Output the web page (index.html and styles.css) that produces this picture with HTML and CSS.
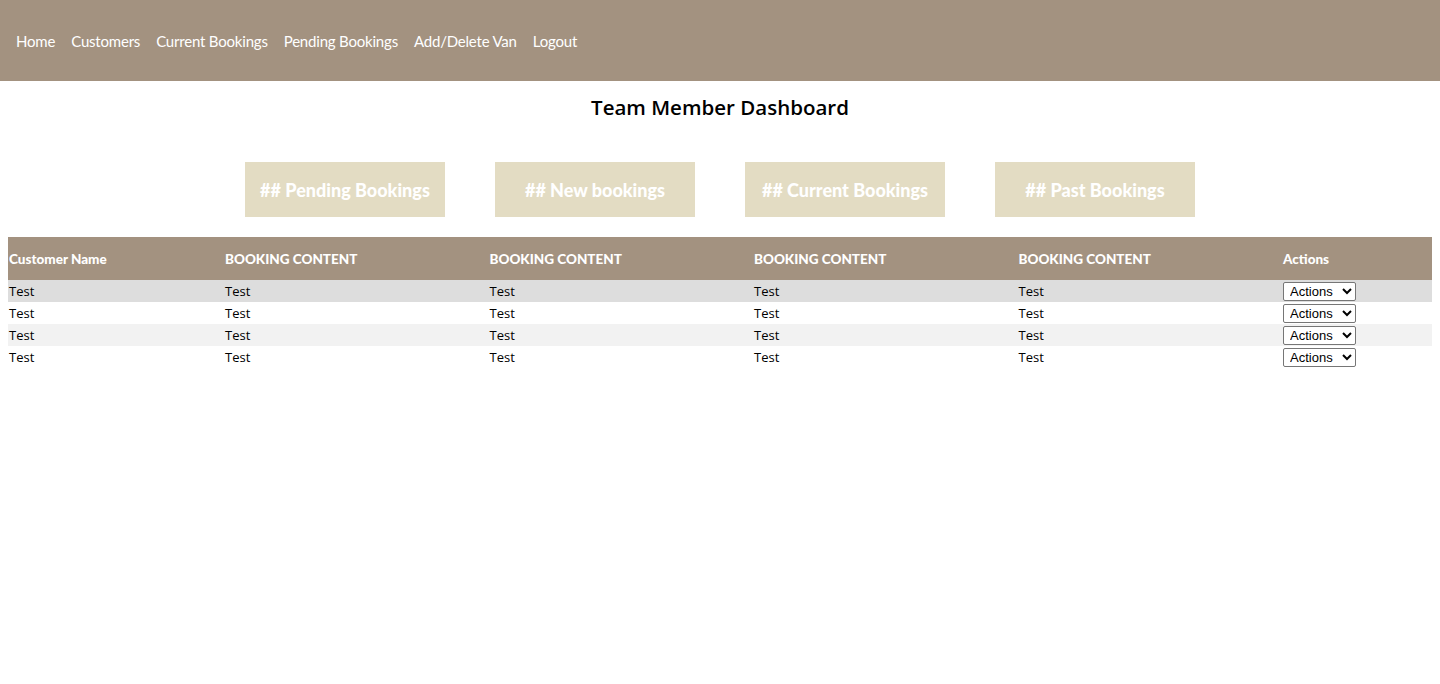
FILE: index.html
```html
<!DOCTYPE html>
<html>
<head>
<meta charset="utf-8">
<link rel="stylesheet" href="styles.css">
<title>Team Member Dashboard</title>
</head>
<body>
<nav class="topnav">
  <a href="#">Home</a>
  <a href="#">Customers</a>
  <a href="#">Current Bookings</a>
  <a href="#">Pending Bookings</a>
  <a href="#">Add/Delete Van</a>
  <a href="#">Logout</a>
</nav>
<main class="content">
  <h1 class="title">Team Member Dashboard</h1>
  <div class="cards">
    <div class="card">## Pending Bookings</div>
    <div class="card">## New bookings</div>
    <div class="card">## Current Bookings</div>
    <div class="card">## Past Bookings</div>
  </div>
  <table class="bookings">
    <colgroup>
      <col class="c1"><col class="c2"><col class="c2"><col class="c2"><col class="c2"><col class="c6">
    </colgroup>
    <thead>
      <tr><th>Customer Name</th><th>BOOKING CONTENT</th><th>BOOKING CONTENT</th><th>BOOKING CONTENT</th><th>BOOKING CONTENT</th><th>Actions</th></tr>
    </thead>
    <tbody>
      <tr class="hover"><td>Test</td><td>Test</td><td>Test</td><td>Test</td><td>Test</td><td><select class="act"><option>Actions</option></select></td></tr>
      <tr><td>Test</td><td>Test</td><td>Test</td><td>Test</td><td>Test</td><td><select class="act"><option>Actions</option></select></td></tr>
      <tr><td>Test</td><td>Test</td><td>Test</td><td>Test</td><td>Test</td><td><select class="act"><option>Actions</option></select></td></tr>
      <tr><td>Test</td><td>Test</td><td>Test</td><td>Test</td><td>Test</td><td><select class="act"><option>Actions</option></select></td></tr>
    </tbody>
  </table>
</main>
</body>
</html>
```

FILE: styles.css
```css
html, body {
  margin: 0;
  padding: 0;
  background: #fff;
}
body {
  font-family: "Lato", "Open Sans", sans-serif;
  color: #000;
}
.topnav {
  background: #a39280;
  height: 81px;
  display: flex;
  align-items: center;
  padding-left: 16px;
  gap: 16px;
  box-sizing: border-box;
}
.topnav a {
  color: #fff;
  text-decoration: none;
  font-size: 15px;
  letter-spacing: -0.2px;
}
.content {
  padding: 0 8px;
}
.title {
  margin: 13px 0 0;
  text-align: center;
  font-family: "Open Sans", sans-serif;
  font-weight: 600;
  font-size: 20.5px;
  line-height: 26px;
  height: 26px;
}
.cards {
  display: flex;
  justify-content: center;
  gap: 50px;
  margin-top: 42px;
}
.card {
  width: 200px;
  height: 55px;
  background: #e3dcc3;
  color: #fff;
  font-weight: 900;
  font-size: 18px;
  display: flex;
  align-items: center;
  justify-content: center;
}
.bookings {
  margin-top: 20px;
  width: 1424px;
  border-collapse: collapse;
  table-layout: fixed;
}
.c1 { width: 216px; }
.c2 { width: 264.5px; }
.c6 { width: 150px; }
.bookings th {
  background: #a39280;
  color: #fff;
  font-weight: 900;
  font-size: 13.5px;
  text-align: left;
  height: 43px;
  padding: 0 1px;
}
.bookings th.name {
  letter-spacing: 0.3px;
}
.bookings td {
  font-family: "Open Sans", sans-serif;
  font-size: 13px;
  height: 22px;
  padding: 0 1px;
  line-height: 18px;
}
.bookings tbody tr:nth-child(odd) {
  background: #f2f2f2;
}
.bookings tbody tr.hover {
  background: #dddddd;
}
.act {
  font-family: "Liberation Sans", Arial, sans-serif;
  font-size: 13px;
  width: 73px;
  height: 19px;
  padding: 0 0 0 2px;
  border: 1px solid #767676;
  border-radius: 2px;
  background: #fff;
  color: #000;
  vertical-align: middle;
}
```
